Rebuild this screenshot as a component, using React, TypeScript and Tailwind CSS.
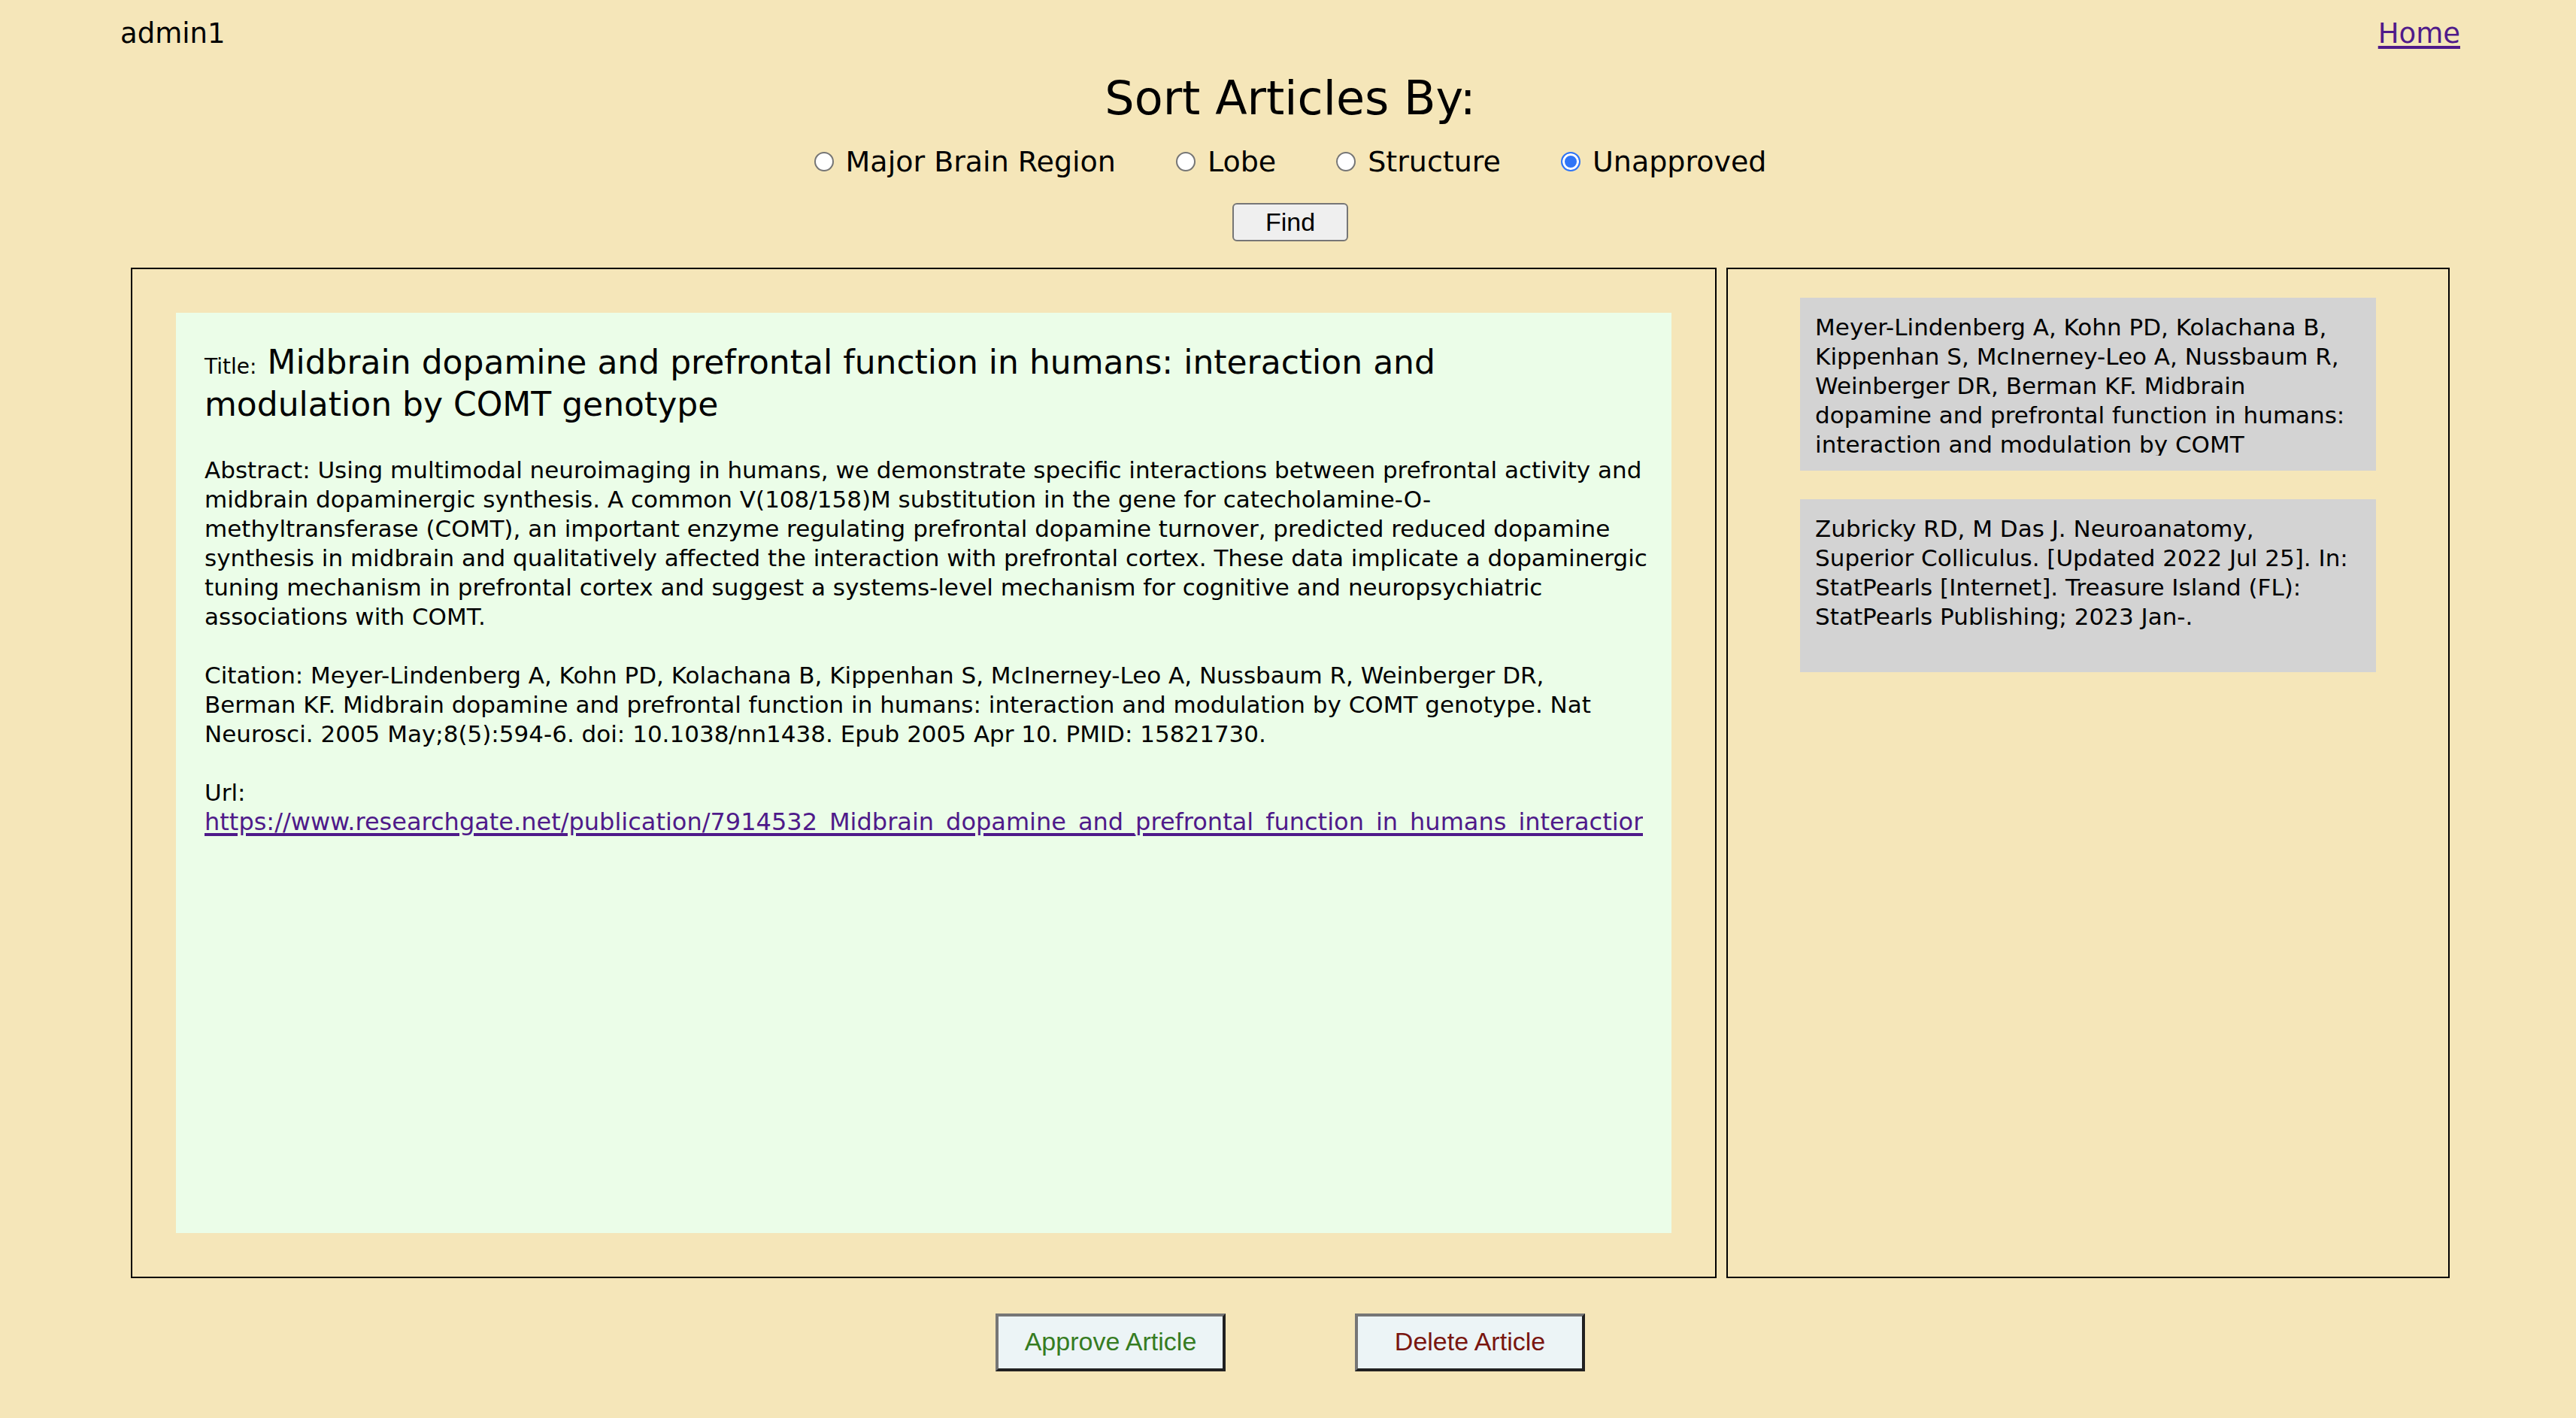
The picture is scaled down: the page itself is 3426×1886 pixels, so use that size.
import { useState } from "react";

const sortOptions = ["Major Brain Region", "Lobe", "Structure", "Unapproved"];

const citations = [
  [
    "Meyer-Lindenberg A, Kohn PD, Kolachana B,",
    "Kippenhan S, McInerney-Leo A, Nussbaum R,",
    "Weinberger DR, Berman KF. Midbrain",
    "dopamine and prefrontal function in humans:",
    "interaction and modulation by COMT",
  ],
  [
    "Zubricky RD, M Das J. Neuroanatomy,",
    "Superior Colliculus. [Updated 2022 Jul 25]. In:",
    "StatPearls [Internet]. Treasure Island (FL):",
    "StatPearls Publishing; 2023 Jan-.",
  ],
];

const abstractLines = [
  "Abstract: Using multimodal neuroimaging in humans, we demonstrate specific interactions between prefrontal activity and",
  "midbrain dopaminergic synthesis. A common V(108/158)M substitution in the gene for catecholamine-O-",
  "methyltransferase (COMT), an important enzyme regulating prefrontal dopamine turnover, predicted reduced dopamine",
  "synthesis in midbrain and qualitatively affected the interaction with prefrontal cortex. These data implicate a dopaminergic",
  "tuning mechanism in prefrontal cortex and suggest a systems-level mechanism for cognitive and neuropsychiatric",
  "associations with COMT.",
];

const citationLines = [
  "Citation: Meyer-Lindenberg A, Kohn PD, Kolachana B, Kippenhan S, McInerney-Leo A, Nussbaum R, Weinberger DR,",
  "Berman KF. Midbrain dopamine and prefrontal function in humans: interaction and modulation by COMT genotype. Nat",
  "Neurosci. 2005 May;8(5):594-6. doi: 10.1038/nn1438. Epub 2005 Apr 10. PMID: 15821730.",
];

const articleUrl =
  "https://www.researchgate.net/publication/7914532_Midbrain_dopamine_and_prefrontal_function_in_humans_interaction";

const actionClass =
  "h-[77px] w-[306px] border-4 border-t-[#767676] border-l-[#767676] border-r-[#212121] border-b-[#212121] bg-[#ecf4f6] pb-1 font-['Liberation_Sans',Arial,sans-serif] text-[34px] leading-[40px]";

function Lines({ lines }: { lines: string[] }) {
  return (
    <>
      {lines.map((line) => (
        <span key={line} className="block">
          {line}
        </span>
      ))}
    </>
  );
}

export default function App() {
  const [sortBy, setSortBy] = useState("Unapproved");

  return (
    <div className="min-h-screen bg-[#f5e6b9] font-['DejaVu_Sans',sans-serif] text-[31px] leading-[39px] text-black">
      <header className="flex items-center justify-between pt-[21px] pr-[154px] pl-[160px] text-[37px] leading-[48px]">
        <span>admin1</span>
        <a href="#home" className="text-[#4f1a8a] underline decoration-4 underline-offset-4">
          Home
        </a>
      </header>

      <main className="pr-[168px] pl-[174px]">
        <form className="flex flex-col items-center" onSubmit={(e) => e.preventDefault()}>
          <h1 className="pt-6 text-[62px] leading-[76px]">Sort Articles By:</h1>
          <div className="flex gap-20 pt-5 text-[38px] leading-[52px]">
            {sortOptions.map((option) => (
              <label key={option} className="flex items-center gap-4">
                <input
                  type="radio"
                  name="sort"
                  value={option}
                  checked={sortBy === option}
                  onChange={() => setSortBy(option)}
                  className="size-[26px] appearance-none rounded-full border-2 border-[#767676] bg-white checked:border-[#2f75f6] checked:bg-[#2f75f6] checked:shadow-[inset_0_0_0_3px_white]"
                />
                {option}
              </label>
            ))}
          </div>
          <button
            type="submit"
            className="mt-[29px] h-[51px] w-[154px] rounded-md border-2 border-[#767676] bg-[#efefef] pb-0.5 font-['Liberation_Sans',Arial,sans-serif] text-[34px] leading-[40px]"
          >
            Find
          </button>
        </form>

        <div className="grid grid-cols-[2110fr_962fr] gap-[13px] pt-[35px]">
          <section className="min-w-0 border-2 border-black p-[58px]">
            <article className="h-[1224px] bg-[#ebfde8] pt-[38px] pr-5 pl-[38px]">
              <h2 className="text-[44px] leading-[56px]">
                <span className="text-[28px] leading-none">Title:</span> Midbrain dopamine and
                prefrontal function in humans: interaction and
                <br />
                modulation by COMT genotype
              </h2>
              <p className="pt-10">
                <Lines lines={abstractLines} />
              </p>
              <p className="pt-[39px]">
                <Lines lines={citationLines} />
              </p>
              <p className="pt-[39px]">Url:</p>
              <a
                href={articleUrl}
                className="mr-[18px] block overflow-hidden text-[32px] whitespace-nowrap text-[#4f1a8a] underline decoration-4 underline-offset-4"
              >
                {articleUrl}
              </a>
            </article>
          </section>

          <section className="min-w-0 border-2 border-black pt-[38px]">
            <ul className="mx-auto flex w-4/5 flex-col gap-[38px]">
              {citations.map((lines) => (
                <li key={lines[0]} className="bg-[#d3d3d3] py-5 pr-2 pl-5">
                  <p className="h-[190px] overflow-hidden">
                    <Lines lines={lines} />
                  </p>
                </li>
              ))}
            </ul>
          </section>
        </div>

        <div className="flex justify-center gap-[172px] pt-[47px]">
          <button type="button" className={`${actionClass} text-[#367c22]`}>
            Approve Article
          </button>
          <button type="button" className={`${actionClass} text-[#79150f]`}>
            Delete Article
          </button>
        </div>
      </main>
    </div>
  );
}
